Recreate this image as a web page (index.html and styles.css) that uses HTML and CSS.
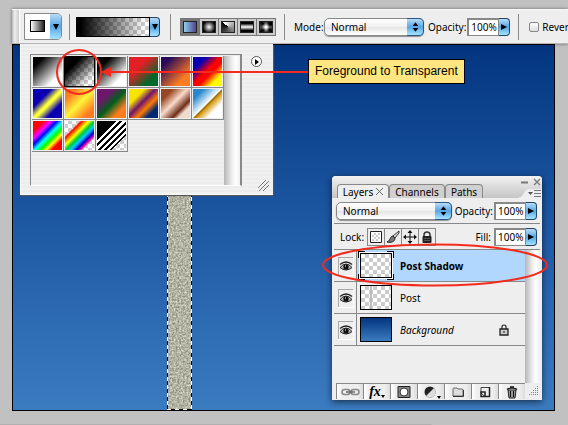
FILE: index.html
```html
<!DOCTYPE html>
<html lang="en">
<head>
<meta charset="utf-8">
<title>Gradient tool</title>
<link rel="stylesheet" href="styles.css">
</head>
<body>
<header class="toolbar">
  <span class="grip"></span>
  <div class="options">
    <div class="tool">
      <span class="tool-icon"></span>
      <button class="aqua" aria-label="Tool presets"><svg class="tri" viewBox="0 0 6 6"><path d="M0 0h6L3 6z"/></svg></button>
    </div>
    <span class="rule"></span>
    <div class="sample">
      <span class="sample-fill"></span>
      <button class="aqua" aria-label="Gradient picker"><svg class="tri" viewBox="0 0 6 6"><path d="M0 0h6L3 6z"/></svg></button>
    </div>
    <span class="rule"></span>
    <div class="types">
      <button class="type on" aria-label="Linear"><span class="t-linear"></span></button>
      <button class="type" aria-label="Radial"><span class="t-radial"></span></button>
      <button class="type" aria-label="Angle"><span class="t-angle"></span></button>
      <button class="type" aria-label="Reflected"><span class="t-reflected"></span></button>
      <button class="type" aria-label="Diamond"><span class="t-diamond"></span></button>
    </div>
    <span class="rule"></span>
    <div class="field mode">
      <label for="mode">Mode:</label>
      <div class="select">
        <select id="mode"><option>Normal</option></select>
        <svg class="updown" viewBox="0 0 17 16"><path d="M6 7l3-4 3 4zM6 9h6l-3 4z"/></svg>
      </div>
    </div>
    <div class="field">
      <label for="opacity">Opacity:</label>
      <div class="number"><input id="opacity" value="100%"><button class="aqua" aria-label="Opacity slider"><svg class="tri" viewBox="0 0 6 6"><path d="M0 0l6 3-6 3z"/></svg></button></div>
    </div>
    <span class="rule"></span>
    <label class="check"><input type="checkbox">Reverse</label>
  </div>
</header>

<main class="canvas">
  <svg class="post" preserveAspectRatio="none">
    <filter id="grain" x="0" y="0" width="1" height="1" color-interpolation-filters="sRGB">
      <feTurbulence type="fractalNoise" baseFrequency="0.55" numOctaves="2" seed="4"/>
      <feColorMatrix values="0.6 0 0 0 0.4  0.6 0 0 0 0.4  0.6 0 0 0 0.34  0 0 0 0 1"/>
    </filter>
    <rect width="100%" height="100%" filter="url(#grain)"/>
  </svg>
  <span class="ants"></span>
</main>

<section class="picker" aria-label="Gradient presets">
  <div class="list">
    <div class="swatches">
      <button class="sw g1" aria-label="Foreground to Background"></button>
      <button class="sw g2" aria-label="Foreground to Transparent"></button>
      <button class="sw g3" aria-label="Black, White"></button>
      <button class="sw g4" aria-label="Red, Green"></button>
      <button class="sw g5" aria-label="Violet, Orange"></button>
      <button class="sw g6" aria-label="Blue, Red, Yellow"></button>
      <button class="sw g7" aria-label="Blue, Yellow, Blue"></button>
      <button class="sw g8" aria-label="Orange, Yellow, Orange"></button>
      <button class="sw g9" aria-label="Violet, Green, Orange"></button>
      <button class="sw g10" aria-label="Yellow, Violet, Orange, Blue"></button>
      <button class="sw g11" aria-label="Copper"></button>
      <button class="sw g12" aria-label="Chrome"></button>
      <button class="sw g13" aria-label="Spectrum"></button>
      <button class="sw g14" aria-label="Transparent Rainbow"></button>
      <button class="sw g15" aria-label="Transparent Stripes"></button>
    </div>
    <span class="scroll"></span>
  </div>
  <div class="side">
    <button class="more" aria-label="Picker menu"><svg class="tri" viewBox="0 0 6 6"><path d="M1 0l4 3-4 3z"/></svg></button>
    <svg class="corner" viewBox="0 0 11 11"><path d="M0 8l8-8M1 11L11 1M5 11l6-6" fill="none" stroke="#777"/></svg>
  </div>
</section>

<section class="layers" aria-label="Layers">
  <div class="tabs">
    <button class="tab active">Layers <svg class="x" viewBox="0 0 7 7"><path d="M0 0l7 7M7 0L0 7"/></svg></button>
    <button class="tab">Channels</button>
    <button class="tab">Paths</button>
    <div class="window">
      <svg viewBox="0 0 24 20"><path d="M3 4.500h7" stroke-width="2"/><path d="M16 1l6 6M22 1l-6 6" stroke-width="1.300"/><path class="notch" d="M0 20q4-1 6-5 2-4 6-4h12v9z"/><path class="dark" d="M10 14h5l-2.500 3z"/><path d="M16 12.500h7M16 15.500h7M16 18.500h7"/></svg>
    </div>
  </div>
  <div class="row blend">
    <div class="select">
      <select aria-label="Blend mode"><option>Normal</option></select>
      <svg class="updown" viewBox="0 0 17 16"><path d="M6 7l3-4 3 4zM6 9h6l-3 4z"/></svg>
    </div>
    <label for="lop">Opacity:</label>
    <div class="number"><input id="lop" value="100%"><button class="aqua" aria-label="Layer opacity slider"><svg class="tri" viewBox="0 0 6 6"><path d="M0 0l6 3-6 3z"/></svg></button></div>
  </div>
  <div class="row lockrow">
    <span class="lock-label">Lock:</span>
    <div class="locks">
      <button aria-label="Lock transparency"><svg viewBox="0 0 16 16"><path d="M2.500 2.500h11v11h-11z" fill="#fff" stroke="#222"/><path d="M6 4h2v2H6zM10 4h2v2h-2zM4 6h2v2H4zM8 6h2v2H8zM6 8h2v2H6zM10 8h2v2h-2zM4 10h2v2H4zM8 10h2v2H8z" fill="#ccc"/></svg></button>
      <button aria-label="Lock pixels"><svg viewBox="0 0 16 16"><path d="M14 2L8 7l2 2 4-5z" fill="#ddd" stroke="#333"/><path d="M8 7C5 7 6 11 2 13c4 1 8 0 8-4z" fill="#777" stroke="#222"/></svg></button>
      <button aria-label="Lock position"><svg viewBox="0 0 16 16"><path d="M8 3v10M3 8h10" stroke="#111"/><path d="M8 1l2.500 3h-5zM8 15l2.500-3h-5zM1 8l3-2.500v5zM15 8l-3-2.500v5z" fill="#111"/></svg></button>
      <button aria-label="Lock all"><svg viewBox="0 0 16 16"><path d="M5 8V6q0-3 3-3t3 3v2" fill="none" stroke="#333" stroke-width="1.500"/><rect x="3.500" y="7" width="9" height="7" rx="1" fill="#222"/><path d="M5 9.500h6M5 11.500h6" stroke="#555"/></svg></button>
    </div>
    <label for="fill">Fill:</label>
    <div class="number"><input id="fill" value="100%"><button class="aqua" aria-label="Fill slider"><svg class="tri" viewBox="0 0 6 6"><path d="M0 0l6 3-6 3z"/></svg></button></div>
  </div>
  <div class="stack">
    <ul class="list-layers">
      <li class="layer selected"><button class="eye" aria-label="Toggle Post Shadow"><svg viewBox="0 0 14 14"><use href="#eye"/></svg></button><span class="thumb check-bg picked"></span><span class="name">Post Shadow</span></li>
      <li class="layer"><button class="eye" aria-label="Toggle Post"><svg viewBox="0 0 14 14"><use href="#eye"/></svg></button><span class="thumb check-bg has-post"></span><span class="name">Post</span></li>
      <li class="layer"><button class="eye" aria-label="Toggle Background"><svg viewBox="0 0 14 14"><use href="#eye"/></svg></button><span class="thumb sky"></span><em class="name">Background</em>
        <svg class="padlock" viewBox="0 0 10 12"><path d="M3 5V3q0-2 2-2t2 2v2" fill="none" stroke="#222" stroke-width="1.200"/><path d="M1 5h8v6H1z" fill="#ccc" stroke="#222" stroke-width="1.300"/><path d="M5 7v2" stroke="#222"/></svg></li>
    </ul>
    <span class="scroll"></span>
  </div>
  <footer class="actions">
    <button aria-label="Link layers"><svg viewBox="0 0 20 14"><g fill="none" stroke="#888" stroke-width="1.500"><rect x="2" y="4.500" width="8" height="5" rx="2.500"/><rect x="11" y="4.500" width="8" height="5" rx="2.500"/><path d="M6 7h9" stroke="#666"/></g></svg></button>
    <button class="fx" aria-label="Layer style"><i>fx</i><svg class="dot" viewBox="0 0 4 3"><path d="M0 0h4L2 3z"/></svg></button>
    <button aria-label="Add mask"><svg viewBox="0 0 20 14"><path d="M4 1.500h12v11H4z" fill="#888" stroke="#222"/><circle cx="10" cy="7" r="4" fill="#fff" stroke="#333"/></svg></button>
    <button aria-label="Adjustment layer"><svg viewBox="0 0 20 14"><circle cx="9" cy="7" r="5.500" fill="#222"/><path d="M13 3A5.500 5.500 0 0 1 5 11z" fill="#ddd"/><path d="M16 11h4l-2 3z"/></svg></button>
    <button aria-label="New group"><svg viewBox="0 0 20 14"><path d="M5 4q0-1 1-1h3l1 1h4q1 0 1 1v6H5z" fill="#ddd" stroke="#666"/><path d="M5 11.500h10.500V5" fill="none" stroke="#333"/></svg></button>
    <button aria-label="New layer"><svg viewBox="0 0 20 14"><path d="M6 2.500h8.500v9H10L6 8z" fill="#eee" stroke="#444"/><path d="M14.500 2v9.500H6V7h4v4" fill="none" stroke="#222" stroke-width="1.500"/></svg></button>
    <button aria-label="Delete layer"><svg viewBox="0 0 20 14"><path d="M6 5h8l-1 8H7z" fill="#999" stroke="#222"/><path d="M8.500 6v6M11.500 6v6" stroke="#111"/><path d="M5 4.500q5-3 10 0M8 2h4" stroke="#222" stroke-width="1.500" fill="none"/></svg></button>
    <svg class="resize" viewBox="0 0 10 10"><path d="M8 0h1v1H8zM6 2h1v1H6zM8 2h1v1H8zM4 4h1v1H4zM6 4h1v1H6zM8 4h1v1H8zM2 6h1v1H2zM4 6h1v1H4zM6 6h1v1H6zM8 6h1v1H8zM0 8h1v1H0zM2 8h1v1H2zM4 8h1v1H4zM6 8h1v1H6zM8 8h1v1H8z" fill="#888"/></svg>
  </footer>
</section>

<svg class="defs" aria-hidden="true"><symbol id="eye" viewBox="0 0 14 14"><path d="M1 8q6-7 12 0-6 5-12 0z" fill="#bbb" stroke="#222"/><circle cx="7" cy="7.500" r="2.700" fill="#111"/><path d="M1 5q6-5 12 0" fill="none" stroke="#222" stroke-width="1.500"/><path d="M6 6.500h1" stroke="#fff"/></symbol></svg>

<p class="callout">Foreground to Transparent</p>
<svg class="pointer" viewBox="0 0 251 48"><circle cx="22" cy="24" r="22" /><path d="M50 24h201"/><path class="head" d="M44 24l10-5v10z"/></svg>
<svg class="ring" viewBox="0 0 228 44"><ellipse cx="114" cy="22" rx="112" ry="20.500"/></svg>
</body>
</html>
```

FILE: styles.css
```css
* { box-sizing: border-box; }
body {
  position: relative;
  display: flex;
  flex-direction: column;
  min-height: 100vh;
  margin: 0;
  padding: 9px 0 14px;
  overflow: hidden;
  background: linear-gradient(#b0b0b0, #b0b0b0) left bottom / 76% 1px no-repeat, #c1c1c1;
  color: #000;
  font: 10px/14px "Noto Sans", "Open Sans", sans-serif;
}
button { margin: 0; padding: 0; border: 0; background: none; font: inherit; color: inherit; }
svg { display: block; }
.defs { position: absolute; width: 0; height: 0; }

.toolbar {
  position: relative;
  z-index: 2;
  display: flex;
  height: 35px;
  margin-left: 12px;
  background: #eee;
  border-top: 1px solid #f8f8f8;
  border-bottom: 1px solid #b5b5b5;
  box-shadow: 0 0 3px #0007;
}
.grip { flex: none; width: 8px; background: linear-gradient(90deg, #bbb, #eee 40%, #ccc); border-right: 1px solid #fff; }
.options { display: flex; flex: 1; align-items: center; padding-left: 4px; overflow: hidden; white-space: nowrap; }
.options > * { flex: none; }
.rule { width: 1px; height: 26px; margin: 0 10px 0 7px; background: #888; }
.tri { width: 6px; height: 6px; }
.aqua {
  display: grid;
  flex: none;
  place-items: center;
  width: 11px;
  border: 1px solid #246;
  border-left: 0;
  border-radius: 0 4px 4px 0;
  background: linear-gradient(#b9dcf8, #56a6e6 50%, #a5e4ff);
}
.tool { display: flex; width: 38px; height: 27px; border: 1px solid #888; border-radius: 0 5px 5px 0; background: #fff; }
.tool-icon { width: 16px; height: 12px; margin: 6px 5px; border: 1px solid #000; background: linear-gradient(90deg, #fff, #222); }
.tool .aqua { border: 0; }
.sample { display: flex; height: 20px; margin-left: -4px; }
.sample-fill {
  width: 74px;
  border: 1px solid #000;
  background: linear-gradient(90deg, #000 5%, #0000 95%), repeating-conic-gradient(#ccc 0 25%, #fff 0 50%) 0 0 / 8px 8px;
}
.sample .aqua { width: 10px; }
.sample + .rule { margin: 0 9px 0 10px; }
.types { display: flex; border: 1px solid #777; background: #777; height: 18px; gap: 1px; }
.type { width: 18px; padding: 2px; background: #ccc; }
.type.on { background: #777; }
.type span { display: block; height: 12px; border: 1px solid #222; }
.t-linear { background: linear-gradient(90deg, #8cd0f0, #53418c); }
.t-radial { background: radial-gradient(circle, #fff, #000 80%); }
.t-angle { background: conic-gradient(from -45deg, #fff, #777 50%, #000); }
.t-reflected { background: linear-gradient(#000 15%, #fff 50%, #000 85%); }
.t-diamond { background: radial-gradient(circle, #fff 10%, #0000 55%), conic-gradient(#555, #000 12%, #000 18%, #555 25%, #000 35%, #555 50%, #000 62%, #555 75%, #000 88%, #555); }
.types + .rule { margin: 0 9px 0 8px; }
.field { display: flex; align-items: center; gap: 1px; }
.field.mode { width: 130px; margin-right: 4px; }
.field.mode label { width: 29px; }
.select { position: relative; flex: 1; height: 18px; }
.select select {
  appearance: none;
  width: 100%;
  height: 18px;
  padding: 0 20px 0 6px;
  border: 1px solid #888;
  border-radius: 5px;
  background: linear-gradient(#fff, #f0f0f0 50%, #e4e4e4 50%, #fff);
  box-shadow: 0 1px 1px #0006;
  color: #000;
  font: inherit;
}
.updown {
  position: absolute;
  top: 0;
  right: 0;
  width: 17px;
  height: 18px;
  border: 1px solid #25578c;
  border-left: 0;
  border-radius: 0 5px 5px 0;
  background: linear-gradient(#b9dcf8, #56a6e6 50%, #a5e4ff);
}
.number { display: flex; height: 18px; }
.number input { width: 32px; height: 18px; padding: 0 0 0 2px; border: 2px solid #888; border-width: 2px 1px 1px 2px; background: #fff; color: #000; font: inherit; }
.field + .rule { margin: 0 10px 0 8px; }
.check { display: flex; align-items: center; gap: 3px; }
.check input { appearance: none; width: 10px; height: 10px; margin: 0; border: 1px solid #888; border-radius: 2px; background: linear-gradient(#fff, #ddd); }

.canvas { position: relative; flex: 1; margin: 0 13px 0 12px; border: 1px solid #000; background: linear-gradient(#03357f, #1e59a4 50%, #3b7bc0); }
.post, .ants { position: absolute; top: 0; left: 154px; width: 25px; height: 100%; }
.ants {
  background:
    repeating-linear-gradient(#000 0 4px, #fff 4px 8px) left / 1px 100% no-repeat,
    repeating-linear-gradient(#fff 0 4px, #000 4px 8px) right / 1px 100% no-repeat,
    repeating-linear-gradient(90deg, #fff 0 4px, #000 4px 8px) bottom / 100% 1px no-repeat;
}

.picker {
  position: absolute;
  z-index: 3;
  top: 44px;
  left: 20px;
  display: flex;
  padding: 10px 4px 8px 10px;
  border: solid #fff;
  border-width: 0 0 1px 1px;
  background: repeating-linear-gradient(#f0f0f0 0 2px, #ececec 2px 4px);
  box-shadow: 1px 1px 1px #555;
  width: 253px;
}
.list { display: flex; height: 132px; margin-left: -1px; border: 1px solid #888; border-bottom-color: #fff; border-right-width: 2px; padding: 1px 0 0 1px; }
.swatches { display: grid; grid-template-columns: repeat(6, 32px); align-content: start; }
.sw { height: 32px; padding: 1px; border: solid #888; border-width: 0 1px 1px 0; background-clip: content-box; box-shadow: inset 0 0 0 1px #eee; }
.scroll { width: 16px; background: linear-gradient(90deg, #b5b5b5, #eee 50%, #fff 75%, #eee); }
.side { display: flex; flex: 1; flex-direction: column; align-items: flex-end; justify-content: space-between; }
.more { display: grid; place-items: center; width: 11px; height: 11px; margin: 2px 7px 0 0; border: 1px solid #555; border-radius: 50%; background: #fff; }
.corner { width: 11px; height: 11px; margin-bottom: -5px; }
.g1 { background-image: linear-gradient(135deg, #000 20%, #fff 75%); }
.g2 { background-image: linear-gradient(135deg, #000 30%, #0000 80%), repeating-conic-gradient(#ccc 0 25%, #fff 0 50%); background-size: auto, 8px 8px; box-shadow: inset 0 0 0 1px #000; }
.g3 { background-image: linear-gradient(135deg, #000 25%, #fff 75%); }
.g4 { background-image: linear-gradient(135deg, #e31e24 35%, #00682a 75%); }
.g5 { background-image: linear-gradient(135deg, #290a59 20%, #ff7c20 75%); }
.g6 { background-image: linear-gradient(135deg, #0a00b2 25%, #f00 48%, #f00 58%, #fffc00 78%); }
.g7 { background-image: linear-gradient(135deg, #0a00b2 33%, #fdff38 50%, #fdff38 54%, #0a00b2 72%); }
.g8 { background-image: linear-gradient(135deg, #ff7b22 20%, #fff53a 50%, #ff7b22 80%); }
.g9 { background-image: linear-gradient(135deg, #6f156c 28%, #00601b 52%, #fd7c20 76%); }
.g10 { background-image: linear-gradient(135deg, #f9e600 28%, #6f156c 46%, #fd7c00 62%, #002874 78%); }
.g11 { background-image: linear-gradient(135deg, #974620 22%, #fadacb 46%, #6e2d18 68%, #efdbce 78%); }
.g12 { background-image: linear-gradient(135deg, #2989cc 20%, #fff 49%, #906a00 51%, #d99f1b 56%, #fff 73%); }
.g13 { background-image: linear-gradient(135deg, red 20%, #f0f 32%, #00f 42%, #0ff 52%, #0f0 62%, #ff0 71%, red 80%); }
.g14 { background-image: linear-gradient(135deg, #0000 27%, red 30%, #ff0 42%, #0c3 51%, #0cf 59%, #00c 68%, #e0a 74%, #0000 79%), repeating-conic-gradient(#ccc 0 25%, #fff 0 50%); background-size: auto, 8px 8px; }
.g15 { background-image: linear-gradient(135deg, #000 35%, #fff 35%, #fff 40%, #000 40%, #000 45%, #fff 45%, #fff 50%, #000 50%, #000 55%, #fff 55%, #fff 60%, #000 60%, #000 65%, #fff 65%, #fff 70%, #000 70%, #000 74%, #0000 74%), repeating-conic-gradient(#ccc 0 25%, #fff 0 50%); background-size: auto, 8px 8px; }

.layers {
  position: absolute;
  z-index: 3;
  top: 176px;
  right: 26px;
  display: flex;
  flex-direction: column;
  width: 210px;
  border-radius: 4px 4px 0 0;
  background: #eee;
  box-shadow: 0 2px 7px #0009;
}
.tabs { display: flex; align-items: flex-end; height: 22px; padding-left: 5px; border-radius: 4px 4px 0 0; background: linear-gradient(#f2f2f2, #c5c5c5); }
.tab { display: flex; align-items: center; justify-content: center; gap: 3px; width: 56px; height: 14px; border: 1px solid #888; border-bottom: 0; border-radius: 4px 4px 0 0; background: #d0d0d0; }
.tab.active { width: 52px; background: #eee; }
.tab:nth-child(3) { width: 38px; }
.x { width: 7px; height: 7px; stroke: #666; fill: none; }
.window { flex: 1; }
.window svg { width: 24px; height: 20px; margin-left: auto; fill: none; stroke: #777; }
.window .notch { fill: #eee; stroke: none; }
.window .dark { fill: #555; stroke: none; }
.row { display: flex; align-items: center; height: 26px; margin: 0 2px; padding: 0 3px 0 2px; border-bottom: 1px solid #888; }
.blend label { margin: 0 1px 0 3px; }
.lockrow { padding-left: 6px; }
.lock-label { width: 27px; }
.locks { display: flex; gap: 1px; padding: 1px; background: #888; }
.locks button { width: 16px; height: 16px; background: #eee; }
.locks svg { width: 16px; height: 16px; }
.lockrow label { margin: 0 3px 0 auto; }
.stack { display: flex; height: 133px; margin: 0 2px; }
.list-layers { flex: 1; margin: 0; padding: 0; list-style: none; }
.layer { display: flex; align-items: center; height: 32px; border-bottom: 1px solid #888; background: #eee; }
.layer.selected { background: linear-gradient(90deg, #eee 22px, #b2d7ff 22px); }
.eye { display: grid; place-items: center; align-self: stretch; width: 23px; border-right: 1px solid #888; }
.eye svg { width: 15px; height: 18px; border: solid #aaa; border-width: 1px 0 0 1px; box-shadow: 1px 1px #fff; }
.thumb { position: relative; width: 32px; height: 25px; margin: 0 8px 0 3px; border: 1px solid #000; }
.check-bg { background: repeating-conic-gradient(#ccc 0 25%, #fff 0 50%) 0 0 / 8px 8px; }
.picked { box-shadow: 0 0 0 1px #fff; }
.picked::before {
  content: "";
  position: absolute;
  inset: -3px;
  border: 1px solid #000;
  clip-path: polygon(0 0, 7px 0, 7px 100%, 0 100%, 0 23px, 3px 23px, 3px 7px, 0 7px, 0 0, 100% 0, 100% 7px, calc(100% - 3px) 7px, calc(100% - 3px) 23px, 100% 23px, 100% 100%, 29px 100%, 29px 0);
}
.has-post { background: linear-gradient(#bbb, #bbb) 9px 0 / 2px 100% no-repeat, repeating-conic-gradient(#ccc 0 25%, #fff 0 50%) 0 0 / 8px 8px; }
.sky { background: linear-gradient(#03357f, #3b7bc0); }
.selected .name { font-weight: bold; }
.padlock { width: 10px; height: 12px; margin: 0 16px 0 auto; }
.stack .scroll { width: 15px; }
.actions { display: flex; align-items: center; height: 17px; margin: 0 2px; padding: 0 1px 1px 2px; }
.actions button { display: flex; align-items: center; justify-content: center; width: 27px; height: 16px; border-top: 1px solid #888; border-left: 1px solid #888; background: linear-gradient(90deg, #fff, #eee 20%, #eee 80%, #ddd); }
.actions button svg { width: 20px; height: 14px; }
.actions .fx i { font: italic bold 14px/12px "Liberation Serif", serif; }
.actions .fx .dot { width: 4px; height: 3px; margin-top: 9px; }
.resize { width: 10px; height: 10px; margin-left: auto; }

.callout { position: absolute; z-index: 4; top: 59px; left: 308px; margin: 0; padding: 4px 6px; border: 1px solid #000; background: #ffe680; font: 12px/15px "Liberation Sans", Arial, sans-serif; white-space: nowrap; }
.pointer, .ring { position: absolute; z-index: 5; overflow: visible; fill: none; stroke: #f32a1c; stroke-width: 2; pointer-events: none; }
.pointer { top: 48px; left: 57px; width: 251px; height: 48px; }
.pointer .head { fill: #f32a1c; stroke: none; }
.ring { top: 243px; right: 19px; width: 228px; height: 44px; }
```
